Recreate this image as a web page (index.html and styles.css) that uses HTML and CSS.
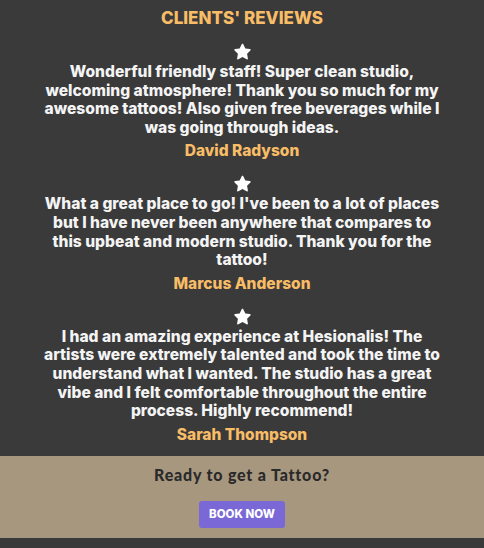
FILE: index.html
```html
<!DOCTYPE html>
<html lang="en">
<head>
<meta charset="utf-8">
<title>Clients' Reviews</title>
<link rel="stylesheet" href="styles.css">
</head>
<body>
<section class="reviews">
  <h2 class="reviews-title">CLIENTS' REVIEWS</h2>
  <div class="review-list">
    <article class="review">
      <svg class="star" viewBox="0 0 24 24" aria-hidden="true"><path d="M12 2.2c.4 0 .8.2 1 .6l2.6 5.3 5.8.8c.9.1 1.3 1.2.6 1.9l-4.2 4.1 1 5.8c.2.9-.8 1.6-1.6 1.2L12 19.1l-5.2 2.8c-.8.4-1.8-.3-1.6-1.2l1-5.8L2 10.8c-.7-.7-.3-1.8.6-1.9l5.8-.8L11 2.8c.2-.4.6-.6 1-.6z"/></svg>
      <p class="review-text">Wonderful friendly staff! Super clean studio, welcoming atmosphere! Thank you so much for my awesome tattoos! Also given free beverages while I was going through ideas.</p>
      <p class="review-name">David Radyson</p>
    </article>
    <article class="review">
      <svg class="star" viewBox="0 0 24 24" aria-hidden="true"><path d="M12 2.2c.4 0 .8.2 1 .6l2.6 5.3 5.8.8c.9.1 1.3 1.2.6 1.9l-4.2 4.1 1 5.8c.2.9-.8 1.6-1.6 1.2L12 19.1l-5.2 2.8c-.8.4-1.8-.3-1.6-1.2l1-5.8L2 10.8c-.7-.7-.3-1.8.6-1.9l5.8-.8L11 2.8c.2-.4.6-.6 1-.6z"/></svg>
      <p class="review-text">What a great place to go! I've been to a lot of places but I have never been anywhere that compares to this upbeat and modern studio. Thank you for the tattoo!</p>
      <p class="review-name">Marcus Anderson</p>
    </article>
    <article class="review">
      <svg class="star" viewBox="0 0 24 24" aria-hidden="true"><path d="M12 2.2c.4 0 .8.2 1 .6l2.6 5.3 5.8.8c.9.1 1.3 1.2.6 1.9l-4.2 4.1 1 5.8c.2.9-.8 1.6-1.6 1.2L12 19.1l-5.2 2.8c-.8.4-1.8-.3-1.6-1.2l1-5.8L2 10.8c-.7-.7-.3-1.8.6-1.9l5.8-.8L11 2.8c.2-.4.6-.6 1-.6z"/></svg>
      <p class="review-text">I had an amazing experience at Hesionalis! The artists were extremely talented and took the time to understand what I wanted. The studio has a great vibe and I felt comfortable throughout the entire process. Highly recommend!</p>
      <p class="review-name">Sarah Thompson</p>
    </article>
  </div>
</section>
<section class="cta">
  <h3 class="cta-title">Ready to get a Tattoo?</h3>
  <a class="cta-button" href="#">BOOK NOW</a>
</section>
<footer class="footer"></footer>
</body>
</html>
```

FILE: styles.css
```css
html, body {
  margin: 0;
  padding: 0;
}

body {
  background: #3a3a3a;
  font-family: Inter, "Noto Sans", sans-serif;
  min-height: 100vh;
}

.reviews {
  padding: 8px 20px 11px;
  display: flex;
  flex-direction: column;
  align-items: center;
}

.reviews-title {
  margin: 0;
  font-size: 17px;
  line-height: 20px;
  font-weight: 800;
  color: #f8bd66;
}

.review-list {
  margin-top: 14px;
  display: flex;
  flex-direction: column;
  gap: 13px;
  width: 100%;
}

.review {
  display: flex;
  flex-direction: column;
  align-items: center;
}

.star {
  width: 19px;
  height: 19px;
  fill: #ffffff;
  display: block;
}

.review-text {
  margin: 2px 0 0;
  max-width: 406px;
  color: #f4f4f4;
  font-size: 15.6px;
  line-height: 18.6px;
  font-weight: 800;
  text-align: center;
}

.review-name {
  margin: 4px 0 0;
  color: #f8bd66;
  font-size: 15.5px;
  line-height: 20px;
  font-weight: 800;
}

.cta {
  background: #a8977f;
  padding: 9px 0 10px;
  display: flex;
  flex-direction: column;
  align-items: center;
}

.cta-title {
  margin: 0;
  font-family: Lato, "Noto Sans", sans-serif;
  font-weight: 900;
  font-size: 16px;
  line-height: 20px;
  letter-spacing: 0.8px;
  color: #2a2a2a;
}

.cta-button {
  margin-top: 16px;
  display: flex;
  align-items: center;
  justify-content: center;
  width: 86px;
  height: 27px;
  border-radius: 3px;
  background: #7a68d6;
  color: #ffffff;
  font-family: Inter, sans-serif;
  font-weight: 800;
  font-size: 11.5px;
  text-decoration: none;
}

.footer {
  height: 10px;
}
```
